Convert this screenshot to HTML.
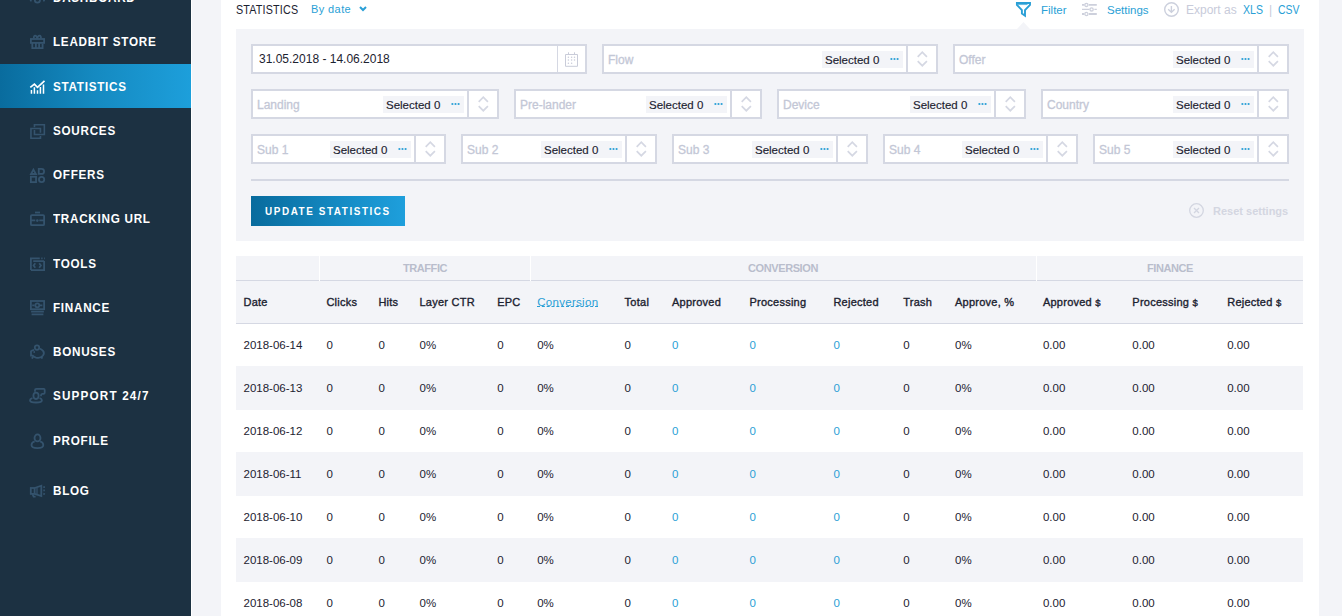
<!DOCTYPE html><html><head><meta charset="utf-8"><style>
*{box-sizing:border-box;margin:0;padding:0}
html,body{width:1342px;height:616px;overflow:hidden;background:#f3f4f8;font-family:"Liberation Sans",sans-serif;color:#1c2230}
.a{position:absolute;white-space:nowrap;line-height:20px}
#sb{position:absolute;left:0;top:0;width:191px;height:616px;background:#1c3142}
#sbline{position:absolute;left:191px;top:0;width:1px;height:616px;background:#fff}
.mi{position:absolute;left:53px;font-weight:bold;font-size:13px;color:#fff;line-height:20px;white-space:nowrap;letter-spacing:0.8px;transform:scaleX(0.9);transform-origin:0 0}
.ic{position:absolute;left:26px;width:24px;height:24px}
#act{position:absolute;left:0;top:64px;width:191px;height:44px;background:linear-gradient(90deg,#096c9e 0%,#158ac1 50%,#1d9fdb 100%)}
#card{position:absolute;left:221px;top:0;width:1098px;height:616px;background:#fff}
#panel{position:absolute;left:236px;top:29px;width:1068px;height:212px;background:#f3f4f8}
.box{position:absolute;height:30px;background:#fff;border:2px solid #d5d8e3}
.ph{position:absolute;left:4px;top:4px;font-size:12px;line-height:20px;color:#c3c7d6;white-space:nowrap;-webkit-text-stroke:0.3px #c3c7d6}
.chip{position:absolute;top:5px;width:81px;height:17px;background:#f3f4f8}
.chip span{position:absolute;left:3px;top:-1px;font-size:11.5px;line-height:20px;color:#1c2230;white-space:nowrap;-webkit-text-stroke:0.15px #1c2230}
.dots{position:absolute;left:67px;top:5.6px;width:11px;height:4px;fill:#2a9fd6}
.dots i{position:absolute;top:-0.1px;width:2.2px;height:2.3px;background:#2a9fd6;border-radius:50%}
.div{position:absolute;top:0;width:2px;height:26px;background:#d5d8e3}
.arr{position:absolute;top:3px;width:13px;height:19px}
#btn{position:absolute;left:251px;top:196px;width:154px;height:30px;background:linear-gradient(90deg,#086b9d 0%,#168cc5 60%,#1e9fdc 100%)}
#tbl{position:absolute;left:236px;top:256px;width:1067px}
.th{position:absolute;font-weight:normal;font-size:11px;line-height:20px;color:#1c2230;white-space:nowrap;letter-spacing:0.25px;-webkit-text-stroke:0.35px #1c2230}
.td{position:absolute;font-size:11.5px;line-height:20px;color:#1c2230;white-space:nowrap}
.bl{color:#2a9fd6}
</style></head><body>
<div id="sb"></div><div id="sbline"></div><div id="act"></div>
<div class="mi" style="top:-12px">DASHBOARD</div>
<div class="mi" style="top:32px">LEADBIT STORE</div>
<div class="mi" style="top:77px">STATISTICS</div>
<div class="mi" style="top:121px">SOURCES</div>
<div class="mi" style="top:165px">OFFERS</div>
<div class="mi" style="top:209px">TRACKING URL</div>
<div class="mi" style="top:254px">TOOLS</div>
<div class="mi" style="top:298px">FINANCE</div>
<div class="mi" style="top:342px">BONUSES</div>
<div class="mi" style="top:386px;letter-spacing:1.3px">SUPPORT 24/7</div>
<div class="mi" style="top:431px">PROFILE</div>
<div class="mi" style="top:481px">BLOG</div>
<svg class="ic" style="top:-14px" viewBox="0 0 24 24"><circle cx="11.4" cy="14.1" r="2.6" fill="none" stroke="#34536d" stroke-width="1.8"/><path d="M4 14.2L5.6 14.8M18.8 14.2L17.2 14.8" fill="none" stroke="#34536d" stroke-width="1.8"/></svg>
<svg class="ic" style="top:30px" viewBox="0 0 24 24"><rect x="4.9" y="9" width="13.2" height="3.9" fill="none" stroke="#34536d" stroke-width="1.8"/><path d="M6.3 12.8V18.2H16.6V13.8M9.9 12.8V18.2M13.1 12.8V18.2" fill="none" stroke="#34536d" stroke-width="1.8"/><path d="M8 8.6C7 5 10.5 4.5 11.3 8.6C12 4.5 15.8 5 14.8 8.6" fill="none" stroke="#34536d" stroke-width="1.8"/></svg>
<svg class="ic" style="top:75px" viewBox="0 0 24 24"><polyline points="4.3,12.3 8.4,9.1 11.5,12.4 18.5,5.9" fill="none" stroke="#fff" stroke-width="1.7"/><path d="M5.45 18.7V15M8.4 18.7V12.3M11.5 18.7V15.2M14.4 18.7V12M17.5 18.7V9.5" stroke="#fff" stroke-width="1.5" fill="none"/></svg>
<svg class="ic" style="top:119px" viewBox="0 0 24 24"><path d="M8.45 8.3V5.75H18.35V15.45H8.45V11" fill="none" stroke="#34536d" stroke-width="1.6"/><path d="M14.45 13.8V9.55H4.95V19.25H14.45V17" fill="none" stroke="#34536d" stroke-width="1.6"/></svg>
<svg class="ic" style="top:163px" viewBox="0 0 24 24"><path d="M7.4 6.6L5 11H9.9Z" fill="none" stroke="#34536d" stroke-width="1.8"/><path d="M12.75 5.85H15.5A2.6 2.55 0 0 1 15.5 10.95H12.75Z" fill="none" stroke="#34536d" stroke-width="1.8"/><rect x="4.85" y="13.75" width="5.2" height="5.4" fill="none" stroke="#34536d" stroke-width="1.8"/><circle cx="15.6" cy="16.5" r="2.65" fill="none" stroke="#34536d" stroke-width="1.8"/></svg>
<svg class="ic" style="top:207px" viewBox="0 0 24 24"><g transform="translate(0,-0.7)"><path d="M9 6.2H14" fill="none" stroke="#34536d" stroke-width="1.8"/><rect x="4.9" y="8.8" width="13.2" height="10.1" rx="1" fill="none" stroke="#34536d" stroke-width="1.8"/><path d="M5 14H9.3M13.3 14H18" fill="none" stroke="#34536d" stroke-width="1.8"/><circle cx="11.3" cy="14.3" r="1.3" fill="#34536d"/></g></svg>
<svg class="ic" style="top:252px" viewBox="0 0 24 24"><g transform="translate(0,-0.9)"><path d="M4.9 19V7.2H13.8M18.1 9.8V19H4.9M7.2 10H18.1" fill="none" stroke="#34536d" stroke-width="1.8"/><path d="M15.2 7.2H16.6M18 7.2H18.8" fill="none" stroke="#34536d" stroke-width="1.8"/><path d="M9.3 12.2L7.6 14.4L9.3 16.6M13.2 12.2L14.9 14.4L13.2 16.6" fill="none" stroke="#34536d" stroke-width="1.8"/></g></svg>
<svg class="ic" style="top:296px" viewBox="0 0 24 24"><g transform="translate(0,-0.9)"><rect x="4.9" y="5.9" width="13.2" height="8.2" fill="none" stroke="#34536d" stroke-width="1.8"/><circle cx="11.3" cy="10.2" r="2" fill="none" stroke="#34536d" stroke-width="1.8"/><path d="M6.2 10.2H8.6M14 10.2H16.4M5.1 16.5H17.9M5.6 19.2H17.4" fill="none" stroke="#34536d" stroke-width="1.8"/></g></svg>
<svg class="ic" style="top:340px" viewBox="0 0 24 24"><circle cx="11" cy="7.6" r="2.2" fill="none" stroke="#34536d" stroke-width="1.8"/><path d="M8.2 9.8C6.5 10 5.5 10.5 5 11.3V15.7H6.7C7.5 16.6 8.5 17.2 10 17.6C12.5 18.2 15.5 17.5 17 15.5C18.2 13.8 18.2 12.2 17 10.8C16 9.6 14.8 9 13.5 8.7" fill="none" stroke="#34536d" stroke-width="1.8"/><path d="M7 16.5L6 18.6M15.5 16.5L16.2 18.6" fill="none" stroke="#34536d" stroke-width="1.8"/><circle cx="8.2" cy="12" r="0.9" fill="#34536d"/></svg>
<svg class="ic" style="top:384px" viewBox="0 0 24 24"><g transform="translate(0,-0.8)"><ellipse cx="10" cy="12.6" rx="2.6" ry="3.2" fill="none" stroke="#34536d" stroke-width="1.8"/><path d="M6.4 14.8C4.5 15.5 4 16.2 4 17C4 18.5 6.5 19.3 10 19.3C13.5 19.3 15.9 18.5 15.9 17C15.9 16.2 15.3 15.5 13.6 14.8" fill="none" stroke="#34536d" stroke-width="1.8"/><path d="M9 8.5V6.8C9 6 9.6 5.7 10.4 5.7H17.8C18.5 5.7 18.7 6 18.7 6.8V9.6C18.7 10.4 18.2 10.7 17.5 10.7H16.3C15.4 10.7 15 11.3 15 12.3V13" fill="none" stroke="#34536d" stroke-width="1.8"/></g></svg>
<svg class="ic" style="top:429px" viewBox="0 0 24 24"><ellipse cx="11.5" cy="8.95" rx="3.0" ry="3.5" fill="none" stroke="#34536d" stroke-width="1.8"/><path d="M8.7 12.4C6.3 13.2 5.5 14.5 5.5 16C5.5 18.1 8 19.1 11.4 19.1C14.8 19.1 17.3 18.1 17.3 16C17.3 14.5 16.5 13.2 14.1 12.4" fill="none" stroke="#34536d" stroke-width="1.8"/></svg>
<svg class="ic" style="top:479px" viewBox="0 0 24 24"><rect x="4.8" y="9" width="3.8" height="5.9" fill="none" stroke="#34536d" stroke-width="1.8"/><path d="M8.6 9L15.3 6.7V17L8.6 14.9" fill="none" stroke="#34536d" stroke-width="1.8"/><path d="M11 8.6V15.4" stroke="#34536d" stroke-width="1.2" fill="none"/><path d="M6.5 15.2L7.6 17.6H9.6" fill="none" stroke="#34536d" stroke-width="1.8"/><path d="M17.3 8.2H18.9M17.3 11.4H18.9M17.3 14.6L18.9 15.3" fill="none" stroke="#34536d" stroke-width="1.8"/></svg>
<div id="card"></div>
<div class="a" style="left:235.5px;top:0;font-size:12.5px;letter-spacing:0.2px;transform:scaleX(0.86);transform-origin:0 0;color:#1c2230">STATISTICS</div>
<div class="a" style="left:311px;top:-1px;font-size:11px;color:#2a9fd6;letter-spacing:0.4px">By date</div>
<svg class="a" style="left:358px;top:5px;width:10px;height:8px" viewBox="0 0 10 8"><path d="M2 2L5 5L8 2" fill="none" stroke="#2a9fd6" stroke-width="2"/></svg>
<svg class="a" style="left:1012px;top:0;width:24px;height:20px" viewBox="0 0 24 20"><path d="M4.9 3H18V4.8L13 10.2V15.6L9.9 13.4V10.2L4.9 4.8Z" fill="none" stroke="#2a9fd6" stroke-width="1.9"/><path d="M6 4.5H15.5" stroke="#2a9fd6" stroke-width="1.1" opacity="0.7"/></svg>
<div class="a" style="left:1041px;top:0;font-size:11.5px;color:#2a9fd6">Filter</div>
<svg class="a" style="left:1081px;top:2px;width:17px;height:15px" viewBox="0 0 17 15"><g fill="none" stroke="#cdd0dc"><path d="M1 2.9H3.2M8 2.9H15.8M1 12H3.2M8 12H15.8" stroke-width="1.8"/><path d="M1 7.4H8.4M13.4 7.4H15.8" stroke-width="1.2"/><circle cx="5.4" cy="2.9" r="1.6" stroke-width="1.3"/><circle cx="10.6" cy="7.4" r="1.6" stroke-width="1.3"/><circle cx="5.4" cy="12" r="1.6" stroke-width="1.3"/></g></svg>
<div class="a" style="left:1107px;top:0;font-size:11.5px;color:#2a9fd6">Settings</div>
<svg class="a" style="left:1163px;top:1px;width:17px;height:17px" viewBox="0 0 17 17"><g fill="none" stroke="#ccd0dd" stroke-width="1.4"><circle cx="8.5" cy="8.5" r="6.8"/><path d="M8.4 5V11.2M5.2 8.3L8.4 11.4L11.6 8.3"/></g></svg>
<div class="a" style="left:1186px;top:0;font-size:12px;color:#c8cbda">Export as</div>
<div class="a" style="left:1243px;top:0;font-size:12px;color:#2a9fd6;transform:scaleX(0.88);transform-origin:0 0">XLS</div>
<div class="a" style="left:1269px;top:0;font-size:12px;color:#c8cbda">|</div>
<div class="a" style="left:1278px;top:0;font-size:12px;color:#2a9fd6;transform:scaleX(0.87);transform-origin:0 0">CSV</div>
<div id="panel"></div>
<svg class="a" style="left:1017px;top:22px;width:13px;height:7px" viewBox="0 0 13 7"><path d="M0 7L6.5 0L13 7Z" fill="#f3f4f8"/></svg>
<div class="box" style="left:251px;top:44px;width:336px"><div class="ph" style="left:6px;top:3px;color:#1c2230;-webkit-text-stroke:0">31.05.2018 - 14.06.2018</div><div style="position:absolute;left:304px;top:0;width:1px;height:26px;background:#d5d8e3"></div><svg style="position:absolute;left:312px;top:6px" width="14" height="16" viewBox="0 0 14 16"><g fill="none" stroke="#c9ccd9" stroke-width="1"><path d="M0.5 2.5V14.3H12.5V2.5Z"/><path d="M3.5 0.3V2.5M9.5 0.3V2.5"/></g><g fill="#c9ccd9"><circle cx="3.4" cy="5.2" r="0.75"/><circle cx="6.6" cy="5.2" r="0.75"/><circle cx="9.5" cy="5.2" r="0.75"/><circle cx="3.4" cy="8.1" r="0.75"/><circle cx="6.6" cy="8.1" r="0.75"/><circle cx="9.5" cy="8.1" r="0.75"/><circle cx="3.4" cy="11.3" r="0.75"/><circle cx="6.6" cy="11.3" r="0.75"/></g></svg></div>
<div class="box" style="left:602px;top:44px;width:336px"><div class="ph">Flow</div><div class="chip" style="left:218px"><span>Selected 0</span><svg class="dots" viewBox="0 0 11 4"><circle cx="2.4" cy="2" r="1.1"/><circle cx="5.5" cy="2" r="1.1"/><circle cx="8.6" cy="2" r="1.1"/></svg></div><div class="div" style="left:302px"></div><div class="arr" style="left:312px"><svg viewBox="0 0 13 19" width="13" height="19"><path d="M1.7 7.8L6.3 3.2L10.9 7.8M1.7 12.1L6.3 16.7L10.9 12.1" fill="none" stroke="#d5d8e3" stroke-width="1.7"/></svg></div></div>
<div class="box" style="left:953px;top:44px;width:336px"><div class="ph">Offer</div><div class="chip" style="left:218px"><span>Selected 0</span><svg class="dots" viewBox="0 0 11 4"><circle cx="2.4" cy="2" r="1.1"/><circle cx="5.5" cy="2" r="1.1"/><circle cx="8.6" cy="2" r="1.1"/></svg></div><div class="div" style="left:302px"></div><div class="arr" style="left:312px"><svg viewBox="0 0 13 19" width="13" height="19"><path d="M1.7 7.8L6.3 3.2L10.9 7.8M1.7 12.1L6.3 16.7L10.9 12.1" fill="none" stroke="#d5d8e3" stroke-width="1.7"/></svg></div></div>
<div class="box" style="left:251px;top:89px;width:248px"><div class="ph">Landing</div><div class="chip" style="left:130px"><span>Selected 0</span><svg class="dots" viewBox="0 0 11 4"><circle cx="2.4" cy="2" r="1.1"/><circle cx="5.5" cy="2" r="1.1"/><circle cx="8.6" cy="2" r="1.1"/></svg></div><div class="div" style="left:214px"></div><div class="arr" style="left:224px"><svg viewBox="0 0 13 19" width="13" height="19"><path d="M1.7 7.8L6.3 3.2L10.9 7.8M1.7 12.1L6.3 16.7L10.9 12.1" fill="none" stroke="#d5d8e3" stroke-width="1.7"/></svg></div></div>
<div class="box" style="left:514px;top:89px;width:248px"><div class="ph">Pre-lander</div><div class="chip" style="left:130px"><span>Selected 0</span><svg class="dots" viewBox="0 0 11 4"><circle cx="2.4" cy="2" r="1.1"/><circle cx="5.5" cy="2" r="1.1"/><circle cx="8.6" cy="2" r="1.1"/></svg></div><div class="div" style="left:214px"></div><div class="arr" style="left:224px"><svg viewBox="0 0 13 19" width="13" height="19"><path d="M1.7 7.8L6.3 3.2L10.9 7.8M1.7 12.1L6.3 16.7L10.9 12.1" fill="none" stroke="#d5d8e3" stroke-width="1.7"/></svg></div></div>
<div class="box" style="left:777px;top:89px;width:249px"><div class="ph">Device</div><div class="chip" style="left:131px"><span>Selected 0</span><svg class="dots" viewBox="0 0 11 4"><circle cx="2.4" cy="2" r="1.1"/><circle cx="5.5" cy="2" r="1.1"/><circle cx="8.6" cy="2" r="1.1"/></svg></div><div class="div" style="left:215px"></div><div class="arr" style="left:225px"><svg viewBox="0 0 13 19" width="13" height="19"><path d="M1.7 7.8L6.3 3.2L10.9 7.8M1.7 12.1L6.3 16.7L10.9 12.1" fill="none" stroke="#d5d8e3" stroke-width="1.7"/></svg></div></div>
<div class="box" style="left:1041px;top:89px;width:248px"><div class="ph">Country</div><div class="chip" style="left:130px"><span>Selected 0</span><svg class="dots" viewBox="0 0 11 4"><circle cx="2.4" cy="2" r="1.1"/><circle cx="5.5" cy="2" r="1.1"/><circle cx="8.6" cy="2" r="1.1"/></svg></div><div class="div" style="left:214px"></div><div class="arr" style="left:224px"><svg viewBox="0 0 13 19" width="13" height="19"><path d="M1.7 7.8L6.3 3.2L10.9 7.8M1.7 12.1L6.3 16.7L10.9 12.1" fill="none" stroke="#d5d8e3" stroke-width="1.7"/></svg></div></div>
<div class="box" style="left:251px;top:134px;width:195px"><div class="ph">Sub 1</div><div class="chip" style="left:77px"><span>Selected 0</span><svg class="dots" viewBox="0 0 11 4"><circle cx="2.4" cy="2" r="1.1"/><circle cx="5.5" cy="2" r="1.1"/><circle cx="8.6" cy="2" r="1.1"/></svg></div><div class="div" style="left:161px"></div><div class="arr" style="left:171px"><svg viewBox="0 0 13 19" width="13" height="19"><path d="M1.7 7.8L6.3 3.2L10.9 7.8M1.7 12.1L6.3 16.7L10.9 12.1" fill="none" stroke="#d5d8e3" stroke-width="1.7"/></svg></div></div>
<div class="box" style="left:461px;top:134px;width:196px"><div class="ph">Sub 2</div><div class="chip" style="left:78px"><span>Selected 0</span><svg class="dots" viewBox="0 0 11 4"><circle cx="2.4" cy="2" r="1.1"/><circle cx="5.5" cy="2" r="1.1"/><circle cx="8.6" cy="2" r="1.1"/></svg></div><div class="div" style="left:162px"></div><div class="arr" style="left:172px"><svg viewBox="0 0 13 19" width="13" height="19"><path d="M1.7 7.8L6.3 3.2L10.9 7.8M1.7 12.1L6.3 16.7L10.9 12.1" fill="none" stroke="#d5d8e3" stroke-width="1.7"/></svg></div></div>
<div class="box" style="left:672px;top:134px;width:196px"><div class="ph">Sub 3</div><div class="chip" style="left:78px"><span>Selected 0</span><svg class="dots" viewBox="0 0 11 4"><circle cx="2.4" cy="2" r="1.1"/><circle cx="5.5" cy="2" r="1.1"/><circle cx="8.6" cy="2" r="1.1"/></svg></div><div class="div" style="left:162px"></div><div class="arr" style="left:172px"><svg viewBox="0 0 13 19" width="13" height="19"><path d="M1.7 7.8L6.3 3.2L10.9 7.8M1.7 12.1L6.3 16.7L10.9 12.1" fill="none" stroke="#d5d8e3" stroke-width="1.7"/></svg></div></div>
<div class="box" style="left:883px;top:134px;width:195px"><div class="ph">Sub 4</div><div class="chip" style="left:77px"><span>Selected 0</span><svg class="dots" viewBox="0 0 11 4"><circle cx="2.4" cy="2" r="1.1"/><circle cx="5.5" cy="2" r="1.1"/><circle cx="8.6" cy="2" r="1.1"/></svg></div><div class="div" style="left:161px"></div><div class="arr" style="left:171px"><svg viewBox="0 0 13 19" width="13" height="19"><path d="M1.7 7.8L6.3 3.2L10.9 7.8M1.7 12.1L6.3 16.7L10.9 12.1" fill="none" stroke="#d5d8e3" stroke-width="1.7"/></svg></div></div>
<div class="box" style="left:1093px;top:134px;width:196px"><div class="ph">Sub 5</div><div class="chip" style="left:78px"><span>Selected 0</span><svg class="dots" viewBox="0 0 11 4"><circle cx="2.4" cy="2" r="1.1"/><circle cx="5.5" cy="2" r="1.1"/><circle cx="8.6" cy="2" r="1.1"/></svg></div><div class="div" style="left:162px"></div><div class="arr" style="left:172px"><svg viewBox="0 0 13 19" width="13" height="19"><path d="M1.7 7.8L6.3 3.2L10.9 7.8M1.7 12.1L6.3 16.7L10.9 12.1" fill="none" stroke="#d5d8e3" stroke-width="1.7"/></svg></div></div>
<div class="a" style="left:251px;top:179px;width:1038px;height:2px;background:#d5d8e3"></div>
<div id="btn"></div>
<div class="a" style="left:264.5px;top:201px;font-size:11px;font-weight:bold;letter-spacing:1.75px;transform:scaleX(0.9);transform-origin:0 0;color:#fff">UPDATE STATISTICS</div>
<svg class="a" style="left:1188px;top:202px;width:17px;height:17px" viewBox="0 0 17 17"><g fill="none" stroke="#d3d6e1" stroke-width="1.3"><circle cx="8.5" cy="8.5" r="6.8"/><path d="M6 6L11 11M11 6L6 11"/></g></svg>
<div class="a" style="left:1213px;top:201px;font-size:11px;font-weight:bold;color:#d3d6e1">Reset settings</div>
<div class="a" style="left:236px;top:256px;width:1067px;height:67px;background:#f3f4f8"></div>
<div class="a" style="left:236px;top:280px;width:1067px;height:1px;background:#d5d8e3"></div>
<div class="a" style="left:236px;top:323px;width:1067px;height:1px;background:#d5d8e3"></div>
<div class="a" style="left:319px;top:256px;width:1px;height:25px;background:#fff"></div>
<div class="a" style="left:530px;top:256px;width:1px;height:25px;background:#fff"></div>
<div class="a" style="left:1036px;top:256px;width:1px;height:25px;background:#fff"></div>
<div class="a" style="left:325px;width:200px;text-align:center;top:258px;font-size:11px;font-weight:bold;color:#b9bdcc;letter-spacing:-0.4px">TRAFFIC</div>
<div class="a" style="left:683px;width:200px;text-align:center;top:258px;font-size:11px;font-weight:bold;color:#b9bdcc;letter-spacing:-0.4px">CONVERSION</div>
<div class="a" style="left:1070px;width:200px;text-align:center;top:258px;font-size:11px;font-weight:bold;color:#b9bdcc;letter-spacing:-0.4px">FINANCE</div>
<div class="th" style="left:243.5px;top:292px">Date</div>
<div class="th" style="left:326.4px;top:292px">Clicks</div>
<div class="th" style="left:378.4px;top:292px">Hits</div>
<div class="th" style="left:419.5px;top:292px">Layer CTR</div>
<div class="th" style="left:497.2px;top:292px">EPC</div>
<div class="th" style="left:537.2px;top:292px;color:#2a9fd6;font-weight:normal;font-size:11.5px;letter-spacing:0.3px;-webkit-text-stroke:0">Conversion</div>
<div class="a" style="left:537.2px;top:306px;width:61px;height:0;border-top:1px dashed #2a9fd6"></div>
<div class="th" style="left:624.6px;top:292px">Total</div>
<div class="th" style="left:672px;top:292px">Approved</div>
<div class="th" style="left:749.4px;top:292px">Processing</div>
<div class="th" style="left:833.4px;top:292px">Rejected</div>
<div class="th" style="left:903.2px;top:292px">Trash</div>
<div class="th" style="left:955px;top:292px">Approve, %</div>
<div class="th" style="left:1042.9px;top:292px">Approved <span style="font-size:9.5px">$</span></div>
<div class="th" style="left:1132.3px;top:292px">Processing <span style="font-size:9.5px">$</span></div>
<div class="th" style="left:1227.2px;top:292px">Rejected <span style="font-size:9.5px">$</span></div>
<div class="td" style="left:243.5px;top:335px">2018-06-14</div>
<div class="td" style="left:326.4px;top:335px">0</div>
<div class="td" style="left:378.4px;top:335px">0</div>
<div class="td" style="left:419.5px;top:335px">0%</div>
<div class="td" style="left:497.2px;top:335px">0</div>
<div class="td" style="left:537.2px;top:335px">0%</div>
<div class="td" style="left:624.6px;top:335px">0</div>
<div class="td bl" style="left:672px;top:335px">0</div>
<div class="td bl" style="left:749.4px;top:335px">0</div>
<div class="td bl" style="left:833.4px;top:335px">0</div>
<div class="td" style="left:903.2px;top:335px">0</div>
<div class="td" style="left:955px;top:335px">0%</div>
<div class="td" style="left:1042.9px;top:335px">0.00</div>
<div class="td" style="left:1132.3px;top:335px">0.00</div>
<div class="td" style="left:1227.2px;top:335px">0.00</div>
<div class="a" style="left:236px;top:366px;width:1067px;height:44px;background:#f3f4f8"></div>
<div class="td" style="left:243.5px;top:378px">2018-06-13</div>
<div class="td" style="left:326.4px;top:378px">0</div>
<div class="td" style="left:378.4px;top:378px">0</div>
<div class="td" style="left:419.5px;top:378px">0%</div>
<div class="td" style="left:497.2px;top:378px">0</div>
<div class="td" style="left:537.2px;top:378px">0%</div>
<div class="td" style="left:624.6px;top:378px">0</div>
<div class="td bl" style="left:672px;top:378px">0</div>
<div class="td bl" style="left:749.4px;top:378px">0</div>
<div class="td bl" style="left:833.4px;top:378px">0</div>
<div class="td" style="left:903.2px;top:378px">0</div>
<div class="td" style="left:955px;top:378px">0%</div>
<div class="td" style="left:1042.9px;top:378px">0.00</div>
<div class="td" style="left:1132.3px;top:378px">0.00</div>
<div class="td" style="left:1227.2px;top:378px">0.00</div>
<div class="td" style="left:243.5px;top:421px">2018-06-12</div>
<div class="td" style="left:326.4px;top:421px">0</div>
<div class="td" style="left:378.4px;top:421px">0</div>
<div class="td" style="left:419.5px;top:421px">0%</div>
<div class="td" style="left:497.2px;top:421px">0</div>
<div class="td" style="left:537.2px;top:421px">0%</div>
<div class="td" style="left:624.6px;top:421px">0</div>
<div class="td bl" style="left:672px;top:421px">0</div>
<div class="td bl" style="left:749.4px;top:421px">0</div>
<div class="td bl" style="left:833.4px;top:421px">0</div>
<div class="td" style="left:903.2px;top:421px">0</div>
<div class="td" style="left:955px;top:421px">0%</div>
<div class="td" style="left:1042.9px;top:421px">0.00</div>
<div class="td" style="left:1132.3px;top:421px">0.00</div>
<div class="td" style="left:1227.2px;top:421px">0.00</div>
<div class="a" style="left:236px;top:452px;width:1067px;height:44px;background:#f3f4f8"></div>
<div class="td" style="left:243.5px;top:464px">2018-06-11</div>
<div class="td" style="left:326.4px;top:464px">0</div>
<div class="td" style="left:378.4px;top:464px">0</div>
<div class="td" style="left:419.5px;top:464px">0%</div>
<div class="td" style="left:497.2px;top:464px">0</div>
<div class="td" style="left:537.2px;top:464px">0%</div>
<div class="td" style="left:624.6px;top:464px">0</div>
<div class="td bl" style="left:672px;top:464px">0</div>
<div class="td bl" style="left:749.4px;top:464px">0</div>
<div class="td bl" style="left:833.4px;top:464px">0</div>
<div class="td" style="left:903.2px;top:464px">0</div>
<div class="td" style="left:955px;top:464px">0%</div>
<div class="td" style="left:1042.9px;top:464px">0.00</div>
<div class="td" style="left:1132.3px;top:464px">0.00</div>
<div class="td" style="left:1227.2px;top:464px">0.00</div>
<div class="td" style="left:243.5px;top:507px">2018-06-10</div>
<div class="td" style="left:326.4px;top:507px">0</div>
<div class="td" style="left:378.4px;top:507px">0</div>
<div class="td" style="left:419.5px;top:507px">0%</div>
<div class="td" style="left:497.2px;top:507px">0</div>
<div class="td" style="left:537.2px;top:507px">0%</div>
<div class="td" style="left:624.6px;top:507px">0</div>
<div class="td bl" style="left:672px;top:507px">0</div>
<div class="td bl" style="left:749.4px;top:507px">0</div>
<div class="td bl" style="left:833.4px;top:507px">0</div>
<div class="td" style="left:903.2px;top:507px">0</div>
<div class="td" style="left:955px;top:507px">0%</div>
<div class="td" style="left:1042.9px;top:507px">0.00</div>
<div class="td" style="left:1132.3px;top:507px">0.00</div>
<div class="td" style="left:1227.2px;top:507px">0.00</div>
<div class="a" style="left:236px;top:538px;width:1067px;height:44px;background:#f3f4f8"></div>
<div class="td" style="left:243.5px;top:550px">2018-06-09</div>
<div class="td" style="left:326.4px;top:550px">0</div>
<div class="td" style="left:378.4px;top:550px">0</div>
<div class="td" style="left:419.5px;top:550px">0%</div>
<div class="td" style="left:497.2px;top:550px">0</div>
<div class="td" style="left:537.2px;top:550px">0%</div>
<div class="td" style="left:624.6px;top:550px">0</div>
<div class="td bl" style="left:672px;top:550px">0</div>
<div class="td bl" style="left:749.4px;top:550px">0</div>
<div class="td bl" style="left:833.4px;top:550px">0</div>
<div class="td" style="left:903.2px;top:550px">0</div>
<div class="td" style="left:955px;top:550px">0%</div>
<div class="td" style="left:1042.9px;top:550px">0.00</div>
<div class="td" style="left:1132.3px;top:550px">0.00</div>
<div class="td" style="left:1227.2px;top:550px">0.00</div>
<div class="td" style="left:243.5px;top:593px">2018-06-08</div>
<div class="td" style="left:326.4px;top:593px">0</div>
<div class="td" style="left:378.4px;top:593px">0</div>
<div class="td" style="left:419.5px;top:593px">0%</div>
<div class="td" style="left:497.2px;top:593px">0</div>
<div class="td" style="left:537.2px;top:593px">0%</div>
<div class="td" style="left:624.6px;top:593px">0</div>
<div class="td bl" style="left:672px;top:593px">0</div>
<div class="td bl" style="left:749.4px;top:593px">0</div>
<div class="td bl" style="left:833.4px;top:593px">0</div>
<div class="td" style="left:903.2px;top:593px">0</div>
<div class="td" style="left:955px;top:593px">0%</div>
<div class="td" style="left:1042.9px;top:593px">0.00</div>
<div class="td" style="left:1132.3px;top:593px">0.00</div>
<div class="td" style="left:1227.2px;top:593px">0.00</div>
</body></html>
